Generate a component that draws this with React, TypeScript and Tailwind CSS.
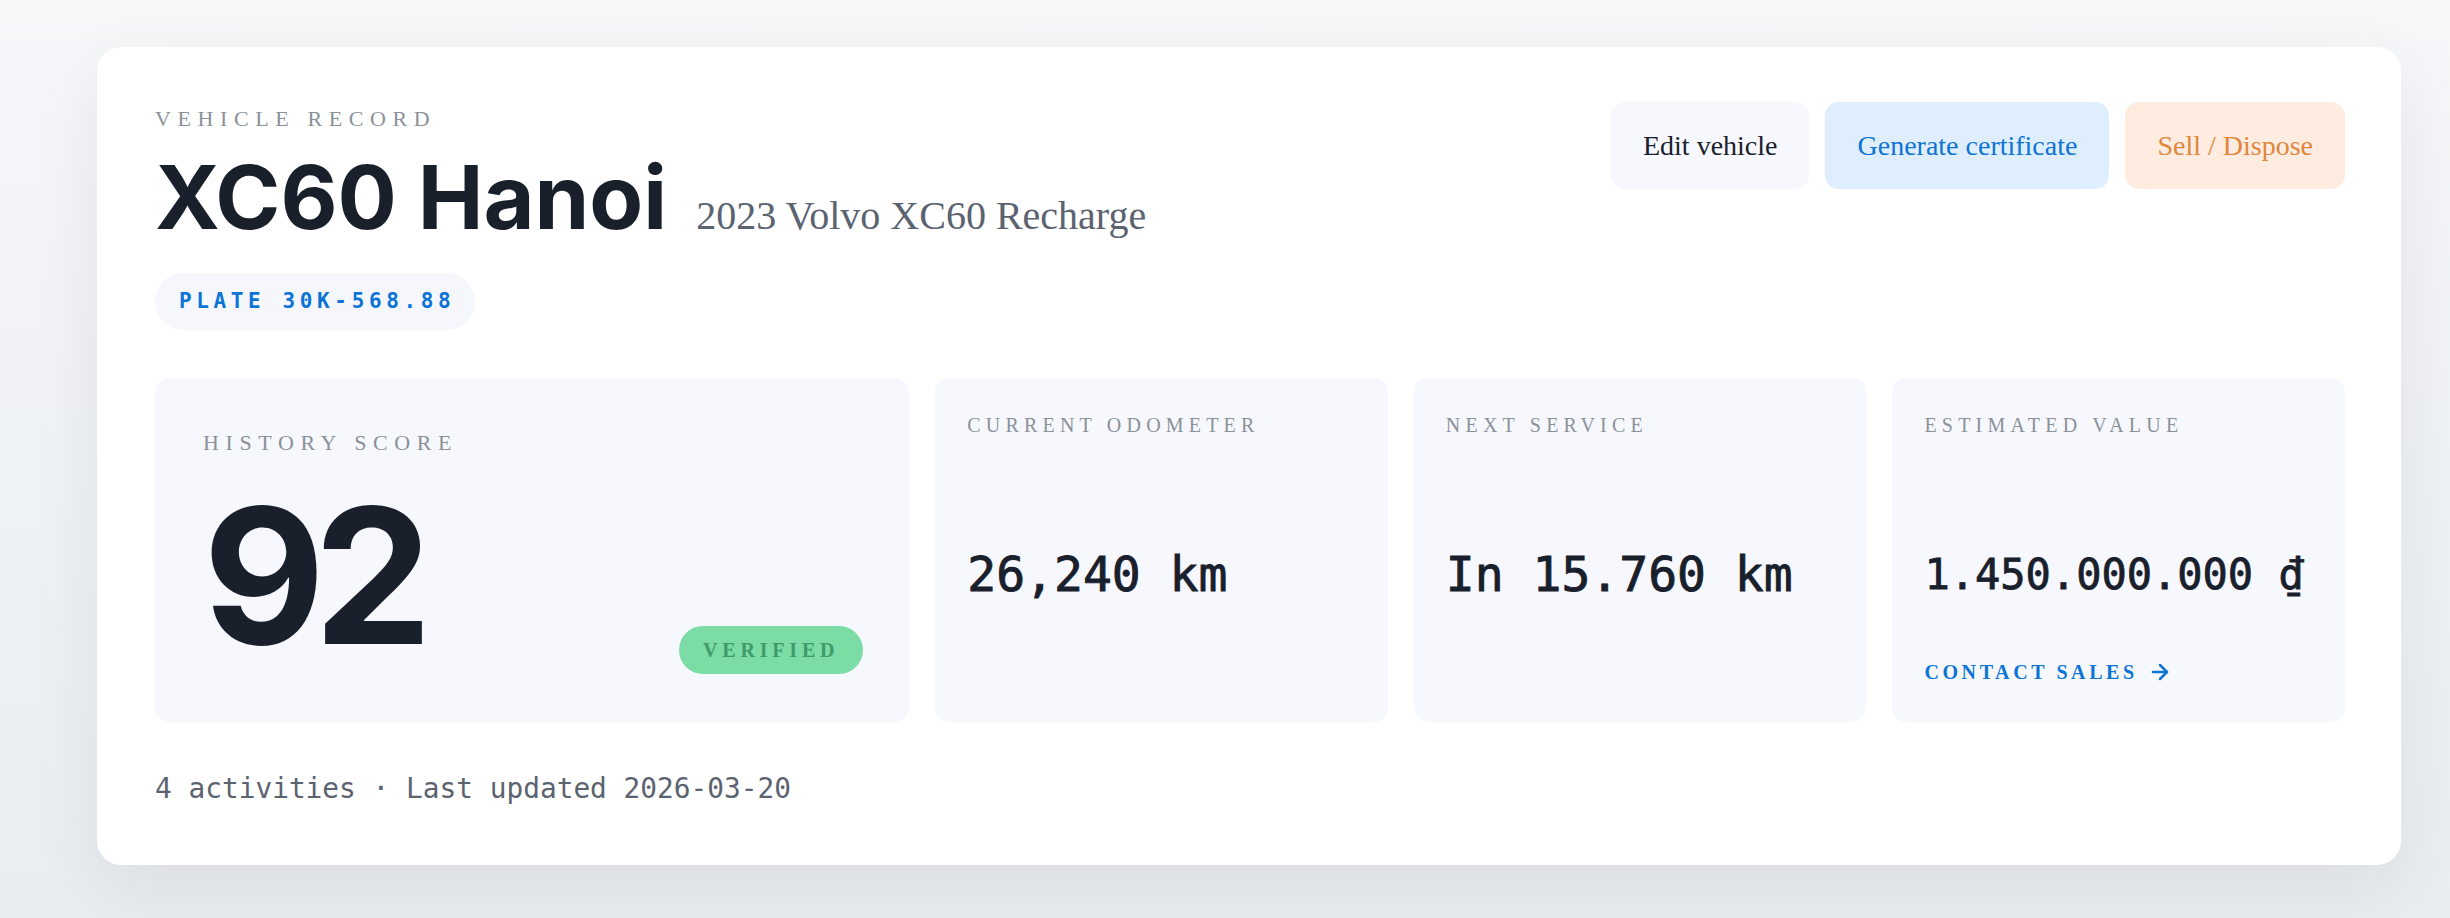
import { ArrowRight } from 'lucide-react';

const serif = "font-['Liberation_Serif',serif]";
const mono = "font-['DejaVu_Sans_Mono',monospace]";
const sans = "font-['Inter',sans-serif]";

function StatLabel({ children }: { children: string }) {
  return (
    <div className={`${serif} text-[20px] leading-[1.5] tracking-[0.26em] uppercase text-[#8b9199]`}>
      {children}
    </div>
  );
}

export default function App() {
  return (
    <div className="min-h-screen w-full bg-gradient-to-b from-[#f5f7f9] to-[#e9edf0] pt-[47px] pb-[54px]">
      <div className="ml-[97px] w-[2304px] rounded-[24px] bg-white pl-[58px] pr-[56px] pt-[55px] pb-[55px] shadow-[0_24px_70px_rgba(15,23,42,0.07)]">
        {/* header */}
        <div className="flex items-start justify-between">
          <div>
            <div className={`${serif} mt-[4px] text-[22px] leading-[1.15] tracking-[0.3em] uppercase text-[#8b9199]`}>
              Vehicle record
            </div>
            <div className="mt-[22px] flex items-baseline gap-[29px]">
              <h1 className={`${sans} text-[88px] leading-none font-bold tracking-[0em] text-[#19202c]`}>
                XC60 Hanoi
              </h1>
              <span className={`${serif} text-[40px] text-[#5b6270]`}>2023 Volvo XC60 Recharge</span>
            </div>
            <div className="mt-[27px] inline-flex h-[57px] items-center rounded-full bg-[#f5f7fd] pl-[24px] pr-[20px]">
              <span className={`${mono} text-[21px] font-bold tracking-[0.22em] text-[#0b74d5]`}>
                PLATE 30K-568.88
              </span>
            </div>
          </div>
          <div className={`${serif} flex gap-4 text-[28px]`}>
            <button className="flex h-[87px] items-center rounded-[14px] bg-[#f6f8fd] px-8 text-[#1a202c]">
              Edit vehicle
            </button>
            <button className="flex h-[87px] items-center rounded-[14px] bg-[#dfeefd] px-8 text-[#0d74d6]">
              Generate certificate
            </button>
            <button className="flex h-[87px] items-center rounded-[14px] bg-[#feece1] px-8 text-[#e0873a]">
              Sell / Dispose
            </button>
          </div>
        </div>

        {/* stats */}
        <div className="mt-[48px] grid grid-cols-[5fr_3fr_3fr_3fr] gap-[26px]">
          <div className="rounded-[14px] bg-[#f6f8fd] pt-12 pb-12 pl-12 pr-[46px]">
            <div className={`${serif} text-[22px] leading-[1.5] tracking-[0.3em] uppercase text-[#8b9199]`}>
              History score
            </div>
            <div className="mt-[19px] flex h-[196px] items-end justify-between">
              <div className={`${sans} text-[188px] leading-[196px] font-bold tracking-[-0.06em] text-[#19202c]`}>92</div>
              <span
                className={`${serif} flex h-[48px] items-center rounded-full bg-[#7bdca6] px-6 text-[20px] font-bold tracking-[0.24em] text-[#3f9b69]`}
              >
                VERIFIED
              </span>
            </div>
          </div>

          <div className="flex flex-col rounded-[14px] bg-[#f6f8fd] p-8">
            <StatLabel>Current odometer</StatLabel>
            <div className={`${mono} mt-[110px] text-[48px] leading-none font-medium text-[#19202c] [-webkit-text-stroke:0.9px_#19202c]`}>
              26,240 km
            </div>
          </div>

          <div className="flex flex-col rounded-[14px] bg-[#f6f8fd] p-8">
            <StatLabel>Next service</StatLabel>
            <div className={`${mono} mt-[110px] text-[48px] leading-none font-medium text-[#19202c] [-webkit-text-stroke:0.9px_#19202c]`}>
              In 15.760 km
            </div>
          </div>

          <div className="flex flex-col rounded-[14px] bg-[#f6f8fd] p-8">
            <StatLabel>Estimated value</StatLabel>
            <div className={`${mono} mt-[114px] text-[42px] leading-none font-medium text-[#19202c] [-webkit-text-stroke:0.8px_#19202c]`}>
              1.450.000.000 ₫
            </div>
            <a
              className={`${serif} mt-auto mb-[3px] flex items-center gap-[10px] text-[20px] leading-[1.5] font-bold tracking-[0.18em] text-[#0b74d5]`}
            >
              CONTACT SALES
              <ArrowRight className="h-[24px] w-[24px]" strokeWidth={2.5} />
            </a>
          </div>
        </div>

        {/* footer */}
        <div className={`${mono} mt-[46px] text-[27.8px] text-[#5b6370]`}>4 activities · Last updated 2026-03-20</div>
      </div>
    </div>
  );
}
